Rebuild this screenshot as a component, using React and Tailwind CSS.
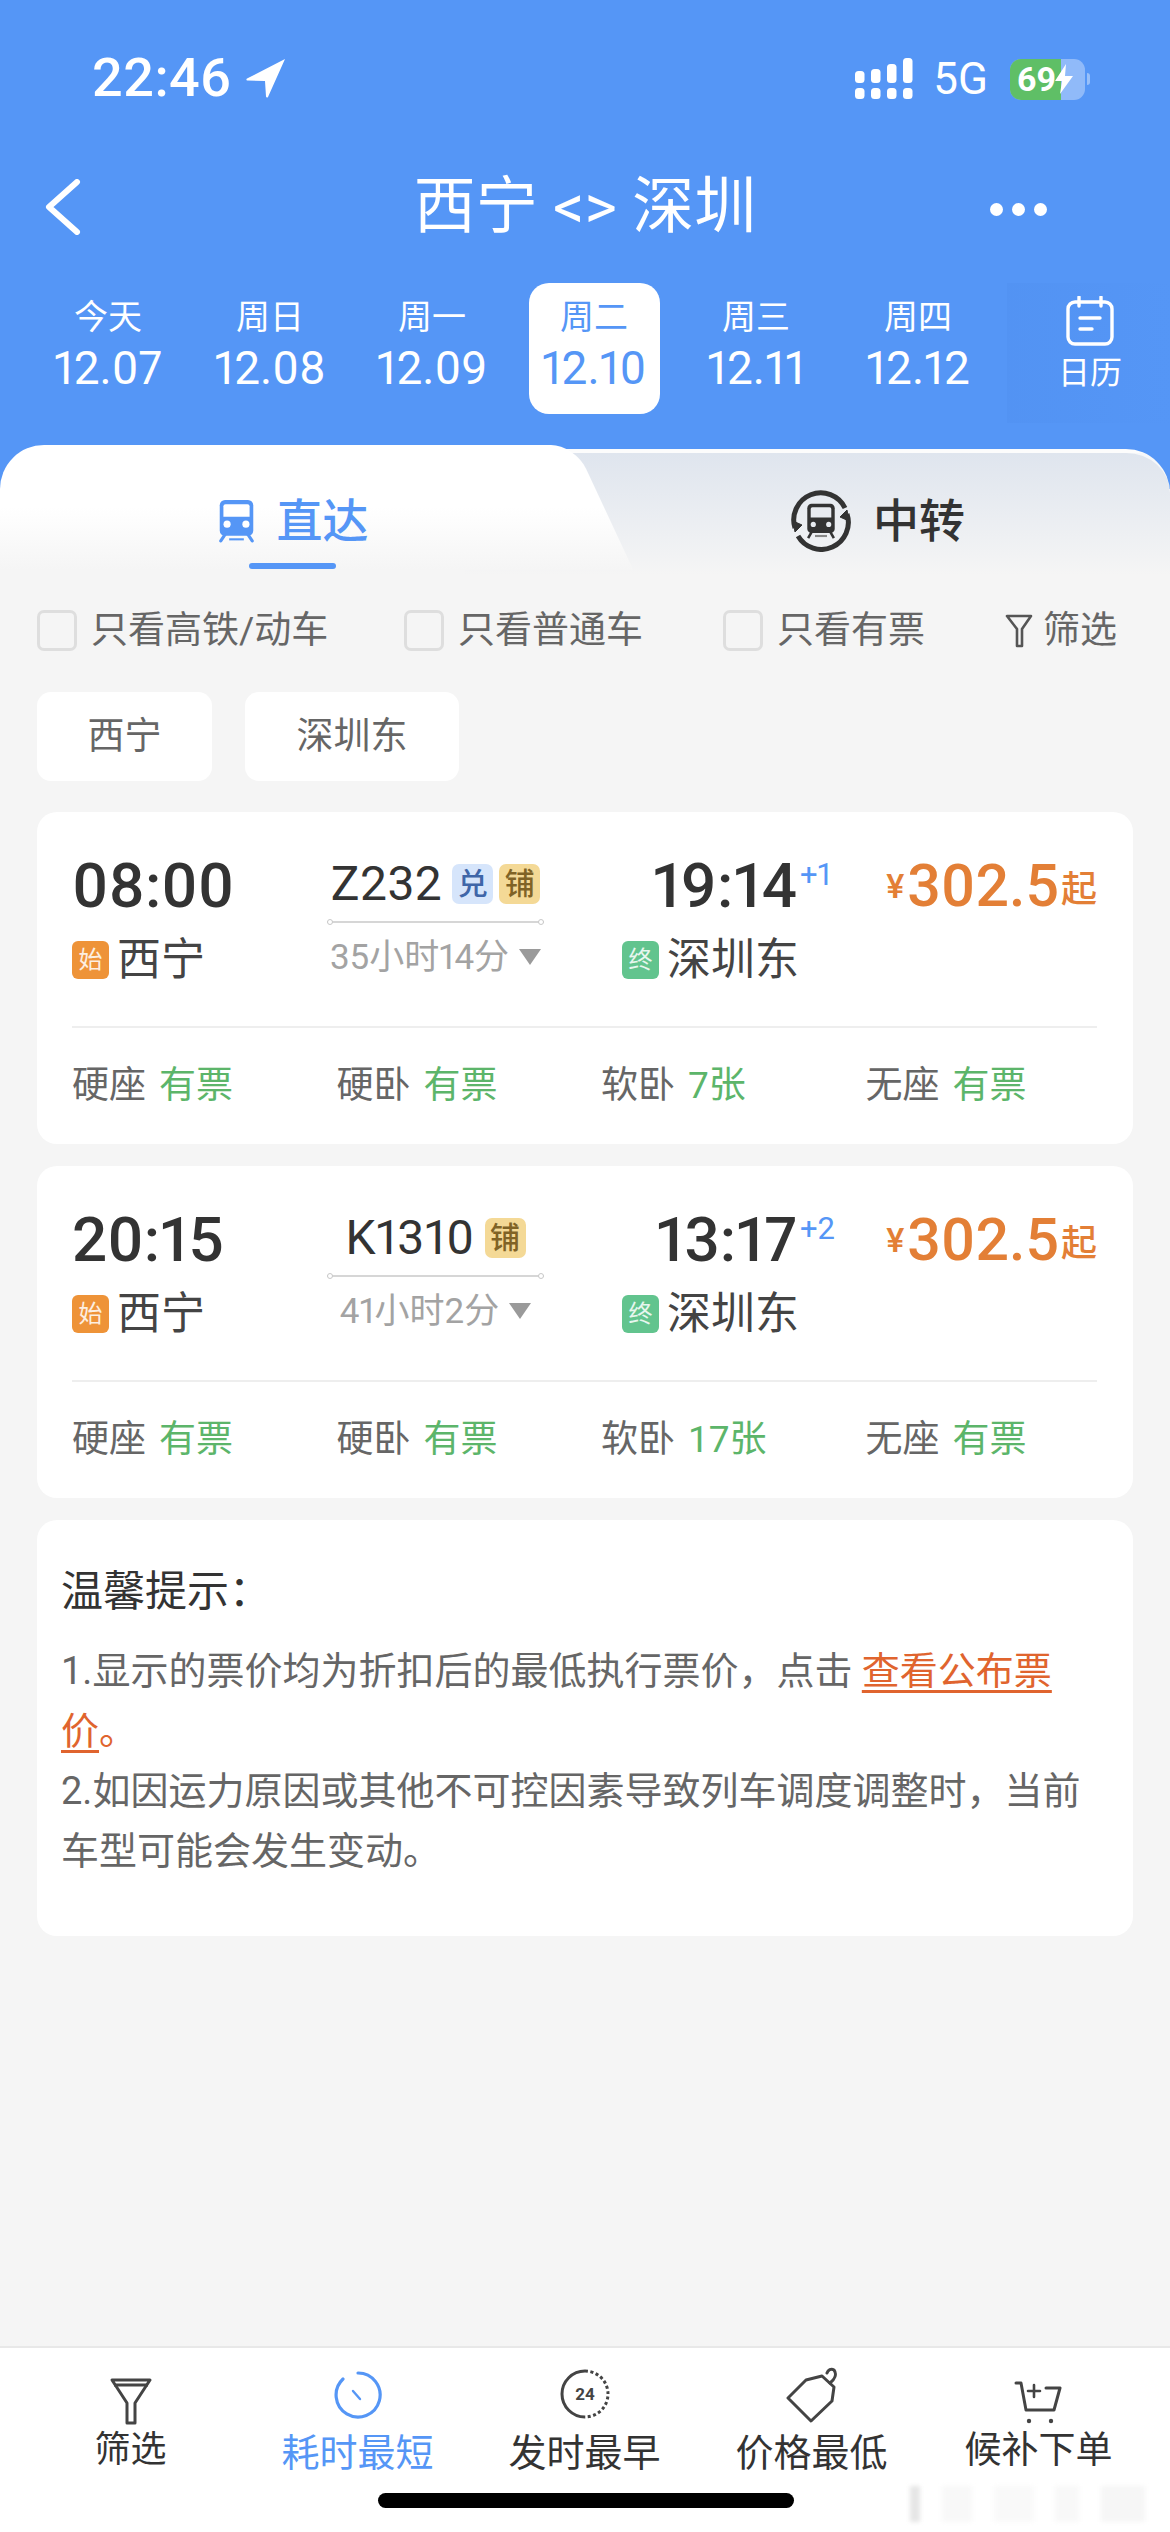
const dates = [
    { label: '今天', date: '12.07' },
    { label: '周日', date: '12.08' },
    { label: '周一', date: '12.09' },
    { label: '周二', date: '12.10', active: true },
    { label: '周三', date: '12.11' },
    { label: '周四', date: '12.12' },
];

const trains = [
    {
        depart: '08:00', code: 'Z232', badges: ['兑', '铺'], duration: '35小时14分', arrive: '19:14', plus: '+1',
        seats: [['硬座', '有票'], ['硬卧', '有票'], ['软卧', '7张'], ['无座', '有票']],
    },
    {
        depart: '20:15', code: 'K1310', badges: ['铺'], duration: '41小时2分', arrive: '13:17', plus: '+2',
        seats: [['硬座', '有票'], ['硬卧', '有票'], ['软卧', '17张'], ['无座', '有票']],
    },
];

const smudges = ['w-[10px] bg-[#e6e6e6]', 'w-[30px] bg-[#f8f8f8]', 'w-[40px] bg-[#f9f9f9]', 'w-[24px] bg-[#f8f8f8]', 'w-[44px] bg-[#f6f6f6]'];

function TrainIcon({ color, glass }) {
    return (
        <svg width="39" height="44" viewBox="0 0 36 42">
            <path d="M7 1h22a5 5 0 0 1 5 5v24a5 5 0 0 1-5 5H7a5 5 0 0 1-5-5V6a5 5 0 0 1 5-5z" fill={color} />
            <path d="M5.5 7a2 2 0 0 1 2-2h21a2 2 0 0 1 2 2v10h-25z" fill={glass} />
            <circle cx="9" cy="24" r="3.4" fill={glass} />
            <circle cx="27" cy="24" r="3.4" fill={glass} />
            <path d="M7 34l-4 6M29 34l4 6" stroke={color} strokeWidth="3" strokeLinecap="round" />
            <path d="M11 38.5h14" stroke={color} strokeWidth="2" />
        </svg>
    );
}

function Signal() {
    return (
        <svg width="58" height="42" viewBox="0 0 58 42" fill="#fff">
            <rect x="0" y="13" width="9.5" height="12" rx="3.5" />
            <rect x="16" y="11" width="9.5" height="14" rx="3.5" />
            <rect x="32" y="6" width="9.5" height="19" rx="3.5" />
            <rect x="48" y="0" width="9.5" height="25" rx="3.5" />
            <rect x="0" y="30" width="9.5" height="11" rx="3.5" />
            <rect x="16" y="30" width="9.5" height="11" rx="3.5" />
            <rect x="32" y="30" width="9.5" height="11" rx="3.5" />
            <rect x="48" y="30" width="9.5" height="11" rx="3.5" />
        </svg>
    );
}

function StatusBar() {
    return (
        <div className="h-[157px] pl-[92px] pr-[80px] flex items-start justify-between pt-[52px]">
            <div className="flex items-center gap-[14px] h-[52px]">
                <span className="text-[54px] leading-none font-medium tracking-[0.5px]">22:46</span>
                <svg width="40" height="40" viewBox="0 0 40 40" fill="#fff">
                    <path d="M39 1L1 20.5c-1 .6-.7 2 .5 2L19 23l1 15.5c.1 1.2 1.5 1.4 2 .4z" />
                </svg>
            </div>
            <div className="flex items-center h-[52px] mt-[1px]">
                <Signal />
                <span className="text-[44px] leading-none ml-[20px] mr-[22px]">5G</span>
                <div className="relative w-[75px] h-[41px] rounded-[11px] bg-white/35 overflow-hidden flex items-center">
                    <div className="absolute left-0 top-0 bottom-0 w-[51px] bg-[#5fbf66]" />
                    <span className="relative ml-[7px] text-[34px] leading-none font-bold">69</span>
                    <svg className="relative -ml-[1px]" width="18" height="30" viewBox="0 0 18 30" fill="#fff">
                        <path d="M11 0L0 17h7l-2 13L18 12h-8z" />
                    </svg>
                </div>
                <div className="w-[3px] h-[12px] ml-[2px] bg-white/40 rounded-r-full" />
            </div>
        </div>
    );
}

function Header() {
    return (
        <div className="h-[489px] shrink-0 bg-[#5596f6] text-white">
            <StatusBar />
            <div className="h-[100px] relative flex items-center justify-center">
                <svg className="absolute left-[44px] top-[22px]" width="38" height="56" viewBox="0 0 38 56" fill="none" stroke="#fff" strokeWidth="6" strokeLinecap="round" strokeLinejoin="round">
                    <path d="M33 3L5 28l28 25" />
                </svg>
                <span className="text-[62px] leading-none">西宁 &lt;&gt; 深圳</span>
                <div className="absolute left-[990px] top-[46px] flex gap-[9px]">
                    <span className="w-[13px] h-[13px] rounded-full bg-white" />
                    <span className="w-[13px] h-[13px] rounded-full bg-white" />
                    <span className="w-[13px] h-[13px] rounded-full bg-white" />
                </div>
            </div>
            <div className="flex items-start pl-[27px] mt-[26px]">
                {dates.map((d) => (
                    <div key={d.date} className="w-[162px] shrink-0 flex justify-center">
                        <div className={`w-[131px] h-[131px] rounded-[20px] flex flex-col items-center pt-[16px] ${d.active ? 'bg-white text-[#5596f6]' : ''}`}>
                            <span className="text-[34px] leading-[36px]">{d.label}</span>
                            <span className="text-[46px] leading-[50px] mt-[8px] proportional-nums">{d.date}</span>
                        </div>
                    </div>
                ))}
                <div className="ml-[8px] w-[166px] shrink-0 h-[140px] flex flex-col items-center pt-[13px] bg-gradient-to-r from-[#5090f0]/50 to-transparent">
                    <svg width="50" height="50" viewBox="0 0 50 50" fill="none" stroke="#fff" strokeWidth="3.4" strokeLinecap="round">
                        <rect x="3" y="6" width="44" height="42" rx="7" />
                        <path d="M14 1v9M36 1v9M15 22h20M15 33h12" />
                    </svg>
                    <span className="text-[32px] leading-[36px] mt-[9px]">日历</span>
                </div>
            </div>
        </div>
    );
}

function TransferIcon() {
    return (
        <div className="relative w-[62px] h-[62px] flex items-center justify-center">
            <svg className="absolute inset-0" width="62" height="62" viewBox="0 0 62 62" fill="none" stroke="#333" strokeWidth="5">
                <path d="M5 38A27 27 0 0 1 55 18" />
                <path d="M57 24A27 27 0 0 1 8 46" />
                <path d="M3 31l2 11 7-7z" fill="#333" strokeWidth="1" />
                <path d="M59 31l-2-11-7 7z" fill="#333" strokeWidth="1" />
            </svg>
            <svg width="34" height="36" viewBox="0 0 36 42">
                <path d="M7 1h22a5 5 0 0 1 5 5v24a5 5 0 0 1-5 5H7a5 5 0 0 1-5-5V6a5 5 0 0 1 5-5z" fill="#333" />
                <path d="M6 7a2 2 0 0 1 2-2h20a2 2 0 0 1 2 2v10H6z" fill="#e8ebf0" />
                <circle cx="9" cy="25" r="3" fill="#e8ebf0" />
                <circle cx="27" cy="25" r="3" fill="#e8ebf0" />
                <path d="M7 34l-4 7M29 34l4 7" stroke="#333" strokeWidth="3" />
                <path d="M11 38.5h14" stroke="#888" strokeWidth="2.5" />
            </svg>
        </div>
    );
}

function Tabs() {
    return (
        <div className="relative -mt-[44px] h-[130px] flex shrink-0">
            <div className="relative z-10 w-[585px] h-[130px] flex flex-col items-center">
                <div className="absolute left-0 top-0 w-[530px] h-[125px] rounded-tl-[44px] bg-gradient-to-b from-white from-50% to-[#f5f5f5]" />
                <div className="absolute left-[440px] top-0 w-[135px] h-[125px] rounded-tr-[24px] origin-top skew-x-[25deg] bg-gradient-to-b from-white from-50% to-[#f5f5f5]" />
                <div className="relative flex items-center gap-[21px] mt-[51px]">
                    <TrainIcon color="#5596f6" glass="#ffffff" />
                    <span className="text-[46px] leading-[50px] font-medium text-[#5596f6]">直达</span>
                </div>
                <div className="relative w-[87px] h-[6px] mt-[17px] rounded-full bg-[#5596f6]" />
            </div>
            <div className="-ml-[120px] flex-1 mt-[4px] h-[126px] rounded-tr-[44px] border-t-[4px] border-white/70 bg-gradient-to-b from-[#dfe5ee] to-[#f5f5f5] flex items-start pl-[325px] pt-[37px]">
                <div className="flex items-center gap-[21px]">
                    <TransferIcon />
                    <span className="text-[46px] leading-[50px] font-medium text-[#333]">中转</span>
                </div>
            </div>
        </div>
    );
}

function Check({ label, className }) {
    return (
        <div className={`flex items-center ${className}`}>
            <span className="w-[40px] h-[41px] rounded-[7px] border-[3px] border-[#dedede] bg-[#f5f5f5]" />
            <span className="ml-[14px] text-[37px] leading-none text-[#666]">{label}</span>
        </div>
    );
}

function Filters() {
    return (
        <div className="flex items-center pl-[37px] mt-[35px] h-[41px]">
            <Check label="只看高铁/动车" className="w-[367px]" />
            <Check label="只看普通车" className="w-[319px]" />
            <Check label="只看有票" className="w-[282px]" />
            <svg width="28" height="34" viewBox="0 0 28 34" fill="none" stroke="#555" strokeWidth="2.6" strokeLinejoin="round">
                <path d="M2 2h24l-9 13v17h-5V15z" />
            </svg>
            <span className="ml-[10px] text-[37px] leading-none text-[#666]">筛选</span>
        </div>
    );
}

function StationTag({ bg, text, name }) {
    return (
        <div className="flex items-center h-[70px] pt-[3px] whitespace-nowrap">
            <span className={`w-[37px] h-[38px] shrink-0 rounded-[6px] flex items-center justify-center text-[24px] leading-none text-white/85 ${bg}`}>{text}</span>
            <span className="ml-[8px] text-[44px] leading-none text-[#444]">{name}</span>
        </div>
    );
}

function TrainCard({ train }) {
    return (
        <div className="mx-[37px] h-[332px] rounded-[20px] bg-white pl-[35px] pr-[36px] pt-[37px]">
            <div className="flex">
                <div className="w-[255px]">
                    <div className="h-[74px] flex items-center text-[62px] leading-none font-medium text-[#333] proportional-nums">{train.depart}</div>
                    <StationTag bg="bg-[#ee9338]" text="始" name="西宁" />
                </div>
                <div className="w-[217px] flex flex-col items-center">
                    <div className="relative h-[74px] w-full flex items-center justify-center gap-[10px] border-b-[2px] border-[#d6d6d6] pb-[2px]">
                        <span className="text-[48px] leading-none text-[#333] tracking-[0.5px] proportional-nums">{train.code}</span>
                        <div className="flex gap-[6px]">
                            {train.badges.map((b) => (
                                <span key={b} className={`w-[41px] h-[40px] rounded-[7px] flex items-center justify-center text-[30px] leading-none font-medium ${b === '兑' ? 'bg-[#d6e5fb] text-[#3f66a8]' : 'bg-[#f4d996] text-[#806326]'}`}>{b}</span>
                            ))}
                        </div>
                        <span className="absolute left-0 -bottom-[4px] w-[6px] h-[6px] rounded-full border border-[#c8c8c8] bg-white" />
                        <span className="absolute right-0 -bottom-[4px] w-[6px] h-[6px] rounded-full border border-[#c8c8c8] bg-white" />
                    </div>
                    <div className="h-[70px] flex items-center gap-[10px] -mt-[1px]">
                        <span className="text-[35px] leading-none text-[#a3a3a3] proportional-nums">{train.duration}</span>
                        <svg width="22" height="16" viewBox="0 0 22 16" fill="#9a9a9a">
                            <path d="M0 0h22L11 16z" />
                        </svg>
                    </div>
                </div>
                <div className="ml-[78px] w-[175px]">
                    <div className="h-[74px] flex items-center justify-end relative text-[62px] leading-none font-medium text-[#333] proportional-nums">
                        {train.arrive}
                        <span className="absolute left-[178px] top-[10px] text-[31px] leading-none font-normal text-[#5596f6]">{train.plus}</span>
                    </div>
                    <StationTag bg="bg-[#62c48e]" text="终" name="深圳东" />
                </div>
                <div className="flex-1 flex items-start justify-end h-[74px] pt-[7px] text-[#e37f36] font-medium">
                    <span className="text-[34px] leading-[60px] mr-[3px]">¥</span>
                    <span className="text-[59px] leading-[60px] proportional-nums">302.5</span>
                    <span className="text-[36px] leading-[60px] mt-[4px] ml-[2px]">起</span>
                </div>
            </div>
            <div className="mt-[33px] h-[2px] bg-[#eeeeee]" />
            <div className="grid grid-cols-4 h-[114px] items-center w-[1058px]">
                {train.seats.map(([name, state]) => (
                    <div key={name} className="text-[37px] leading-none text-[#666] flex gap-[13px]">
                        <span>{name}</span>
                        <span className="text-[#5cb56a]">{state}</span>
                    </div>
                ))}
            </div>
        </div>
    );
}

function Tips() {
    return (
        <div className="mx-[37px] mt-[22px] h-[416px] rounded-[20px] bg-white px-[24px] pt-[47px]">
            <div className="text-[42px] leading-[50px] text-[#333]">温馨提示：</div>
            <div className="mt-[24px] w-[1040px] text-[38px] leading-[60px] text-[#666]">
                1.显示的票价均为折扣后的最低执行票价，点击 <span className="text-[#e0642e] underline underline-offset-[6px]">查看公布票价</span><span className="text-[#e0642e]">。</span>
                <br />
                2.如因运力原因或其他不可控因素导致列车调度调整时，当前车型可能会发生变动。
            </div>
        </div>
    );
}

function FooterItem({ icon, label, active, labelClass }) {
    return (
        <div className="w-[227px] h-full flex flex-col items-center">
            <div className="h-[78px] flex items-end">{icon}</div>
            <span className={`${labelClass} leading-none ${active ? 'text-[#5596f6]' : 'text-[#333]'}`}>{label}</span>
        </div>
    );
}

function Footer() {
    const items = [
        {
            label: '筛选', labelClass: 'text-[36px] mt-[6px]',
            icon: (
                <svg className="mb-[1px]" width="44" height="48" viewBox="0 0 44 48" fill="none" stroke="#444" strokeWidth="3" strokeLinejoin="round">
                    <path d="M3 3h38L26 26v20h-8V26z" />
                    <path d="M5 8h34" />
                </svg>
            ),
        },
        {
            label: '耗时最短', labelClass: 'text-[38px] mt-[8px]', active: true,
            icon: (
                <svg className="mb-[7px]" width="48" height="48" viewBox="0 0 48 48" fill="none" stroke="#5596f6" strokeWidth="3.2" strokeLinecap="round">
                    <path d="M24 2a22 22 0 1 1-15 6" />
                    <path d="M19 20l7 8" strokeWidth="2.4" />
                </svg>
            ),
        },
        {
            label: '发时最早', labelClass: 'text-[38px] mt-[8px]',
            icon: (
                <svg className="mb-[7px]" width="50" height="50" viewBox="0 0 50 50" fill="none" stroke="#444" strokeWidth="3">
                    <path d="M25 2a23 23 0 1 0 0 46" />
                    <path d="M25 2a23 23 0 0 1 0 46" strokeDasharray="3 2.5" />
                    <text x="25" y="31" textAnchor="middle" fontSize="17" fontWeight="700" fontFamily="Roboto" fill="#444" stroke="none">24</text>
                </svg>
            ),
        },
        {
            label: '价格最低', labelClass: 'text-[38px] mt-[8px]',
            icon: (
                <svg className="mb-[3px]" width="56" height="56" viewBox="0 0 56 56" fill="none" stroke="#444" strokeWidth="3" strokeLinejoin="round">
                    <path d="M22 13L38 9l12 11-2 14-21 20L4 31z" />
                    <path d="M46 16c5-4 7-9 4-13-3-2-6 0-7 3" strokeLinecap="round" />
                </svg>
            ),
        },
        {
            label: '候补下单', labelClass: 'text-[37px] mt-[6px]',
            icon: (
                <svg className="mb-[1px]" width="50" height="44" viewBox="0 0 50 44" fill="none" stroke="#444" strokeWidth="3" strokeLinecap="round" strokeLinejoin="round">
                    <path d="M2 2h5l5 27h28l6-22H32" />
                    <path d="M20 4v12M14 10h12" strokeWidth="2.6" />
                    <circle cx="15" cy="40" r="2.2" fill="#444" stroke="none" />
                    <circle cx="37" cy="40" r="2.2" fill="#444" stroke="none" />
                </svg>
            ),
        },
    ];
    return (
        <div className="relative h-[186px] shrink-0 bg-white border-t-[2px] border-[#e8e8e8] flex px-[17px]">
            {items.map((item) => (
                <FooterItem key={item.label} {...item} />
            ))}
            <div className="absolute left-[378px] top-[145px] w-[416px] h-[15px] rounded-full bg-black" />
            <div className="absolute left-[910px] top-[138px] w-[235px] h-[36px] flex justify-between blur-[2px]">
                {smudges.map((s, i) => (
                    <span key={i} className={`h-full ${s}`} />
                ))}
            </div>
        </div>
    );
}

export default function App() {
    return (
        <div className="w-[1170px] h-[2532px] flex flex-col overflow-hidden bg-[#f5f5f5] font-['Roboto','Noto_Sans_CJK_SC',sans-serif]">
            <Header />
            <Tabs />
            <div className="flex-1">
                <Filters />
                <div className="flex gap-[33px] pl-[37px] mt-[41px]">
                    <div className="w-[175px] h-[89px] rounded-[14px] bg-white flex items-center justify-center text-[37px] text-[#666]">西宁</div>
                    <div className="w-[214px] h-[89px] rounded-[14px] bg-white flex items-center justify-center text-[37px] text-[#666]">深圳东</div>
                </div>
                <div className="mt-[31px] flex flex-col gap-[22px]">
                    {trains.map((t) => (
                        <TrainCard key={t.code} train={t} />
                    ))}
                </div>
                <Tips />
            </div>
            <Footer />
        </div>
    );
}
